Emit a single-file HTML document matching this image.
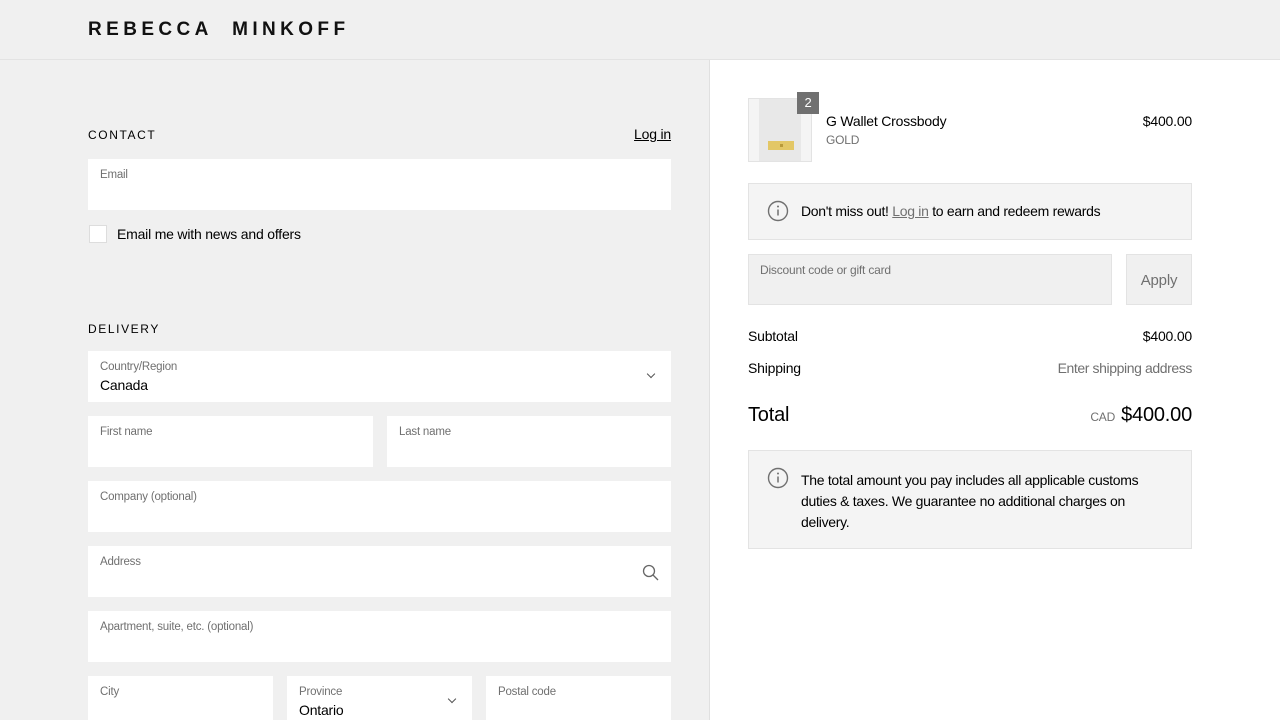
<!DOCTYPE html>
<html><head><meta charset="utf-8"><style>
*{box-sizing:border-box;margin:0;padding:0}
body{width:1280px;height:720px;overflow:hidden;background:#fff;font-family:"Liberation Sans",sans-serif;color:#000;position:relative;letter-spacing:-0.2px}
.a{position:absolute}
.left{left:0;top:0;width:710px;height:720px;background:#f0f0f0;border-right:1px solid #e0e0e0}
.hdr{left:0;top:0;width:1280px;height:60px;background:#f0f0f0;border-bottom:1px solid #e3e3e3}
.logo{left:88px;top:19px;font-size:19px;letter-spacing:4.4px;font-weight:bold;color:#111}
.f{position:absolute;background:#fff;height:51px}
.f .l{position:absolute;left:12px;top:10px;font-size:11.5px;color:#707070}
.f .v{position:absolute;left:12px;top:26px;font-size:14px}
.h{font-size:12px;letter-spacing:1.6px}
.chev{position:absolute;right:17px;top:20px;width:6px;height:6px;border-right:1.2px solid #555;border-bottom:1.2px solid #555;transform:rotate(45deg)}
.sm{font-size:14px}
</style></head><body>
<div class="a left"></div>
<div class="a hdr"></div>
<div class="a logo">REBECCA&nbsp;&nbsp;MINKOFF</div>

<div class="a h" style="left:88px;top:128px">CONTACT</div>
<div class="a" style="right:609px;top:126px;font-size:14px;text-decoration:underline">Log in</div>
<div class="f" style="left:88px;top:159px;width:583px"><div class="l">Email</div></div>
<div class="a" style="left:89px;top:225px;width:18px;height:18px;background:#fff;border:1px solid #ddd"></div>
<div class="a" style="left:117px;top:226px;font-size:14px">Email me with news and offers</div>

<div class="a h" style="left:88px;top:322px">DELIVERY</div>
<div class="f" style="left:88px;top:351px;width:583px"><div class="l">Country/Region</div><div class="v">Canada</div><div class="chev"></div></div>
<div class="f" style="left:88px;top:416px;width:285px"><div class="l">First name</div></div>
<div class="f" style="left:387px;top:416px;width:284px"><div class="l">Last name</div></div>
<div class="f" style="left:88px;top:481px;width:583px"><div class="l">Company (optional)</div></div>
<div class="f" style="left:88px;top:546px;width:583px"><div class="l">Address</div>
<svg style="position:absolute;right:12px;top:18px" width="17" height="17" viewBox="0 0 17 17"><circle cx="7" cy="7" r="5.5" fill="none" stroke="#666" stroke-width="1.3"/><path d="M11 11l5 5" stroke="#666" stroke-width="1.3"/></svg></div>
<div class="f" style="left:88px;top:611px;width:583px"><div class="l">Apartment, suite, etc. (optional)</div></div>
<div class="f" style="left:88px;top:676px;width:185px"><div class="l">City</div></div>
<div class="f" style="left:287px;top:676px;width:185px"><div class="l">Province</div><div class="v">Ontario</div><div class="chev"></div></div>
<div class="f" style="left:486px;top:676px;width:185px"><div class="l">Postal code</div></div>

<div class="a" style="left:748px;top:98px;width:64px;height:64px;background:#f4f4f4;border:1px solid #e3e3e3"><div class="a" style="left:10px;top:0;width:42px;height:62px;background:#e8e8e8"></div><div class="a" style="left:19px;top:42px;width:26px;height:9px;background:#e3c766"><div class="a" style="left:12px;top:3px;width:3px;height:3px;background:#b99a3a"></div></div></div>
<div class="a" style="left:797px;top:92px;width:22px;height:22px;background:#707070;color:#fff;font-size:13px;text-align:center;line-height:22px">2</div>
<div class="a" style="left:826px;top:113px;font-size:14px">G Wallet Crossbody</div>
<div class="a" style="left:826px;top:133px;font-size:12px;color:#707070">GOLD</div>
<div class="a" style="right:88px;top:113px;font-size:14px">$400.00</div>

<div class="a" style="left:748px;top:183px;width:444px;height:57px;background:#f4f4f4;border:1px solid #e3e3e3"></div>
<svg class="a" style="left:767px;top:200px" width="22" height="22" viewBox="0 0 22 22"><circle cx="11" cy="11" r="9.5" fill="none" stroke="#707070" stroke-width="1.4"/><circle cx="11" cy="6.5" r="1" fill="#707070"/><path d="M11 9.5v6" stroke="#707070" stroke-width="1.5"/></svg>
<div class="a sm" style="left:801px;top:203px;letter-spacing:-0.3px">Don't miss out! <span style="color:#707070;text-decoration:underline">Log in</span> to earn and redeem rewards</div>

<div class="a" style="left:748px;top:254px;width:364px;height:51px;background:#f0f0f0;border:1px solid #e3e3e3"><div class="a" style="left:11px;top:8px;font-size:12px;color:#707070">Discount code or gift card</div></div>
<div class="a" style="left:1126px;top:254px;width:66px;height:51px;background:#f0f0f0;border:1px solid #e3e3e3;color:#707070;font-size:15px;text-align:center;line-height:51px">Apply</div>

<div class="a sm" style="left:748px;top:328px">Subtotal</div>
<div class="a sm" style="right:88px;top:328px">$400.00</div>
<div class="a sm" style="left:748px;top:360px">Shipping</div>
<div class="a sm" style="right:88px;top:360px;color:#707070;letter-spacing:-0.4px">Enter shipping address</div>
<div class="a" style="left:748px;top:404px;font-size:20px">Total</div>
<div class="a" style="right:88px;top:404px;font-size:20px"><span style="font-size:12px;color:#707070;margin-right:6px">CAD</span>$400.00</div>

<div class="a" style="left:748px;top:450px;width:444px;height:99px;background:#f4f4f4;border:1px solid #e3e3e3"></div>
<svg class="a" style="left:767px;top:467px" width="22" height="22" viewBox="0 0 22 22"><circle cx="11" cy="11" r="9.5" fill="none" stroke="#707070" stroke-width="1.4"/><circle cx="11" cy="6.5" r="1" fill="#707070"/><path d="M11 9.5v6" stroke="#707070" stroke-width="1.5"/></svg>
<div class="a sm" style="left:801px;top:470px;width:345px;line-height:21px;letter-spacing:-0.3px">The total amount you pay includes all applicable customs duties &amp; taxes. We guarantee no additional charges on delivery.</div>
</body></html>
